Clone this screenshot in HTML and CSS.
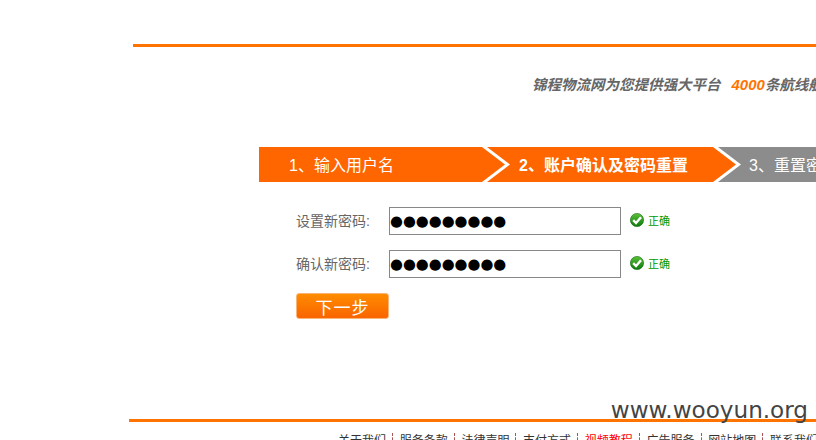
FILE: index.html
```html
<!DOCTYPE html>
<html lang="zh-CN">
<head>
  <meta charset="UTF-8">
  <title>找回密码</title>
  <link rel="stylesheet" href="styles.css">
</head>
<body>
  <div class="top-line"></div>
  <div class="slogan">锦程物流网为您提供强大平台<em>4000</em>条航线航班任您选择</div>

  <!-- Steps -->
  <div class="steps">
    <div class="step step-first">1、输入用户名</div>
    <div class="step step-current">2、账户确认及密码重置</div>
    <div class="step step-last">3、重置密码成功</div>
  </div>

  <!-- Form -->
  <form class="reset-form">
    <div class="form-row">
      <label class="form-label" for="new-pwd">设置新密码:</label>
      <input class="form-input" type="text" id="new-pwd" value="●●●●●●●●●">
      <span class="ok">
        <svg class="ok-icon" width="14" height="14" viewBox="0 0 14 14">
          <defs>
            <linearGradient id="okfill" x1="0" y1="0" x2="0" y2="1">
              <stop offset="0" stop-color="#5cc03a"/>
              <stop offset="1" stop-color="#0a7a0a"/>
            </linearGradient>
          </defs>
          <circle cx="7" cy="7" r="6.6" fill="url(#okfill)" stroke="#0d6b0d" stroke-width="0.6"/>
          <path d="M3.2 7.2 L6 10 L11 4.2" fill="none" stroke="#fff" stroke-width="2.4"/>
        </svg>
        正确
      </span>
    </div>
    <div class="form-row">
      <label class="form-label" for="confirm-pwd">确认新密码:</label>
      <input class="form-input" type="text" id="confirm-pwd" value="●●●●●●●●●">
      <span class="ok">
        <svg class="ok-icon" width="14" height="14" viewBox="0 0 14 14">
          <circle cx="7" cy="7" r="6.6" fill="url(#okfill)" stroke="#0d6b0d" stroke-width="0.6"/>
          <path d="M3.2 7.2 L6 10 L11 4.2" fill="none" stroke="#fff" stroke-width="2.4"/>
        </svg>
        正确
      </span>
    </div>
    <button class="next-btn" type="button">下一步</button>
  </form>

  <!-- Footer -->
  <div class="footer">
    <a href="#">关于我们</a>
    <a href="#">服务条款</a>
    <a href="#">法律声明</a>
    <a href="#">支付方式</a>
    <a href="#" class="hot">视频教程</a>
    <a href="#">广告服务</a>
    <a href="#">网站地图</a>
    <a href="#">联系我们</a>
  </div>

  <div class="watermark">www.wooyun.org</div>
</body>
</html>
```

FILE: styles.css
```css
html, body {
  height: 440px;
  overflow: hidden;
}
body {
  position: relative;
  margin: 0;
  background-color: #fff;
  font-family: "Liberation Sans", "Noto Sans CJK SC", sans-serif;
}
.top-line {
  margin: 44px 0 0 133px;
  height: 3px;
  background-color: #ff7300;
}
.slogan {
  margin: 28px 0 0 532px;
  width: 400px;
  height: 20px;
  line-height: 20px;
  font-size: 14.5px;
  font-weight: bold;
  font-style: italic;
  color: #666;
  white-space: nowrap;
}
.slogan em {
  margin-left: 11px;
  font-size: 15px;
  color: #ff7300;
}
.steps {
  display: flex;
  margin: 52px 0 0 259px;
  width: 700px;
  height: 35px;
}
.step {
  flex: none;
  height: 35px;
  line-height: 37px;
  font-size: 16px;
  color: #fff;
  white-space: nowrap;
  box-sizing: border-box;
}
.step-first {
  width: 246px;
  padding-left: 30px;
  background-color: #f60;
  clip-path: polygon(0 0, 223px 0, 246px 50%, 223px 100%, 0 100%);
}
.step-current {
  width: 249px;
  margin-left: -18px;
  padding-left: 32px;
  font-weight: bold;
  background-color: #f60;
  clip-path: polygon(0 0, 226px 0, 249px 50%, 226px 100%, 0 100%, 23px 50%);
}
.step-last {
  width: 240px;
  margin-left: -18px;
  padding-left: 31px;
  background-color: #8c8c8c;
  clip-path: polygon(0 0, 100% 0, 100% 100%, 0 100%, 23px 50%);
}
.reset-form {
  margin: 25px 0 0 296px;
}
.form-row {
  display: flex;
  align-items: center;
  height: 28px;
  margin-bottom: 15px;
}
.form-label {
  width: 93px;
  padding-bottom: 2px;
  font-size: 14px;
  color: #666;
}
.form-input {
  width: 232px;
  height: 28px;
  padding: 0 0 2px;
  font-family: "DejaVu Sans", sans-serif;
  font-size: 14.8px;
  color: #000;
  border: 1px solid #888;
  box-sizing: border-box;
  outline: none;
}
.ok {
  display: flex;
  align-items: center;
  gap: 4px;
  margin-left: 9px;
  padding-bottom: 2px;
  font-size: 11px;
  color: #090;
}
.next-btn {
  display: block;
  width: 93px;
  height: 26px;
  margin-top: 0;
  padding: 0;
  font-family: inherit;
  font-size: 17px;
  letter-spacing: 1px;
  color: #fff;
  background: linear-gradient(#ff8c00, #f96400);
  border: 1px solid #fbb477;
  border-radius: 3px;
  cursor: pointer;
}
.footer {
  margin: 100px 0 0 129px;
  padding: 11px 0 0 209px;
  width: 700px;
  border-top: 3px solid #ff7300;
  display: flex;
  font-size: 12px;
  line-height: 16px;
  white-space: nowrap;
}
.footer a {
  color: #333;
  text-decoration: none;
  padding-right: 6px;
  margin-right: 6.7px;
  border-right: 1px dashed #a55;
}
.footer a.hot {
  color: #f00;
}
.watermark {
  position: absolute;
  right: 8px;
  top: 397px;
  font-family: "DejaVu Sans", sans-serif;
  font-size: 23.1px;
  color: #444;
  white-space: nowrap;
}
```
